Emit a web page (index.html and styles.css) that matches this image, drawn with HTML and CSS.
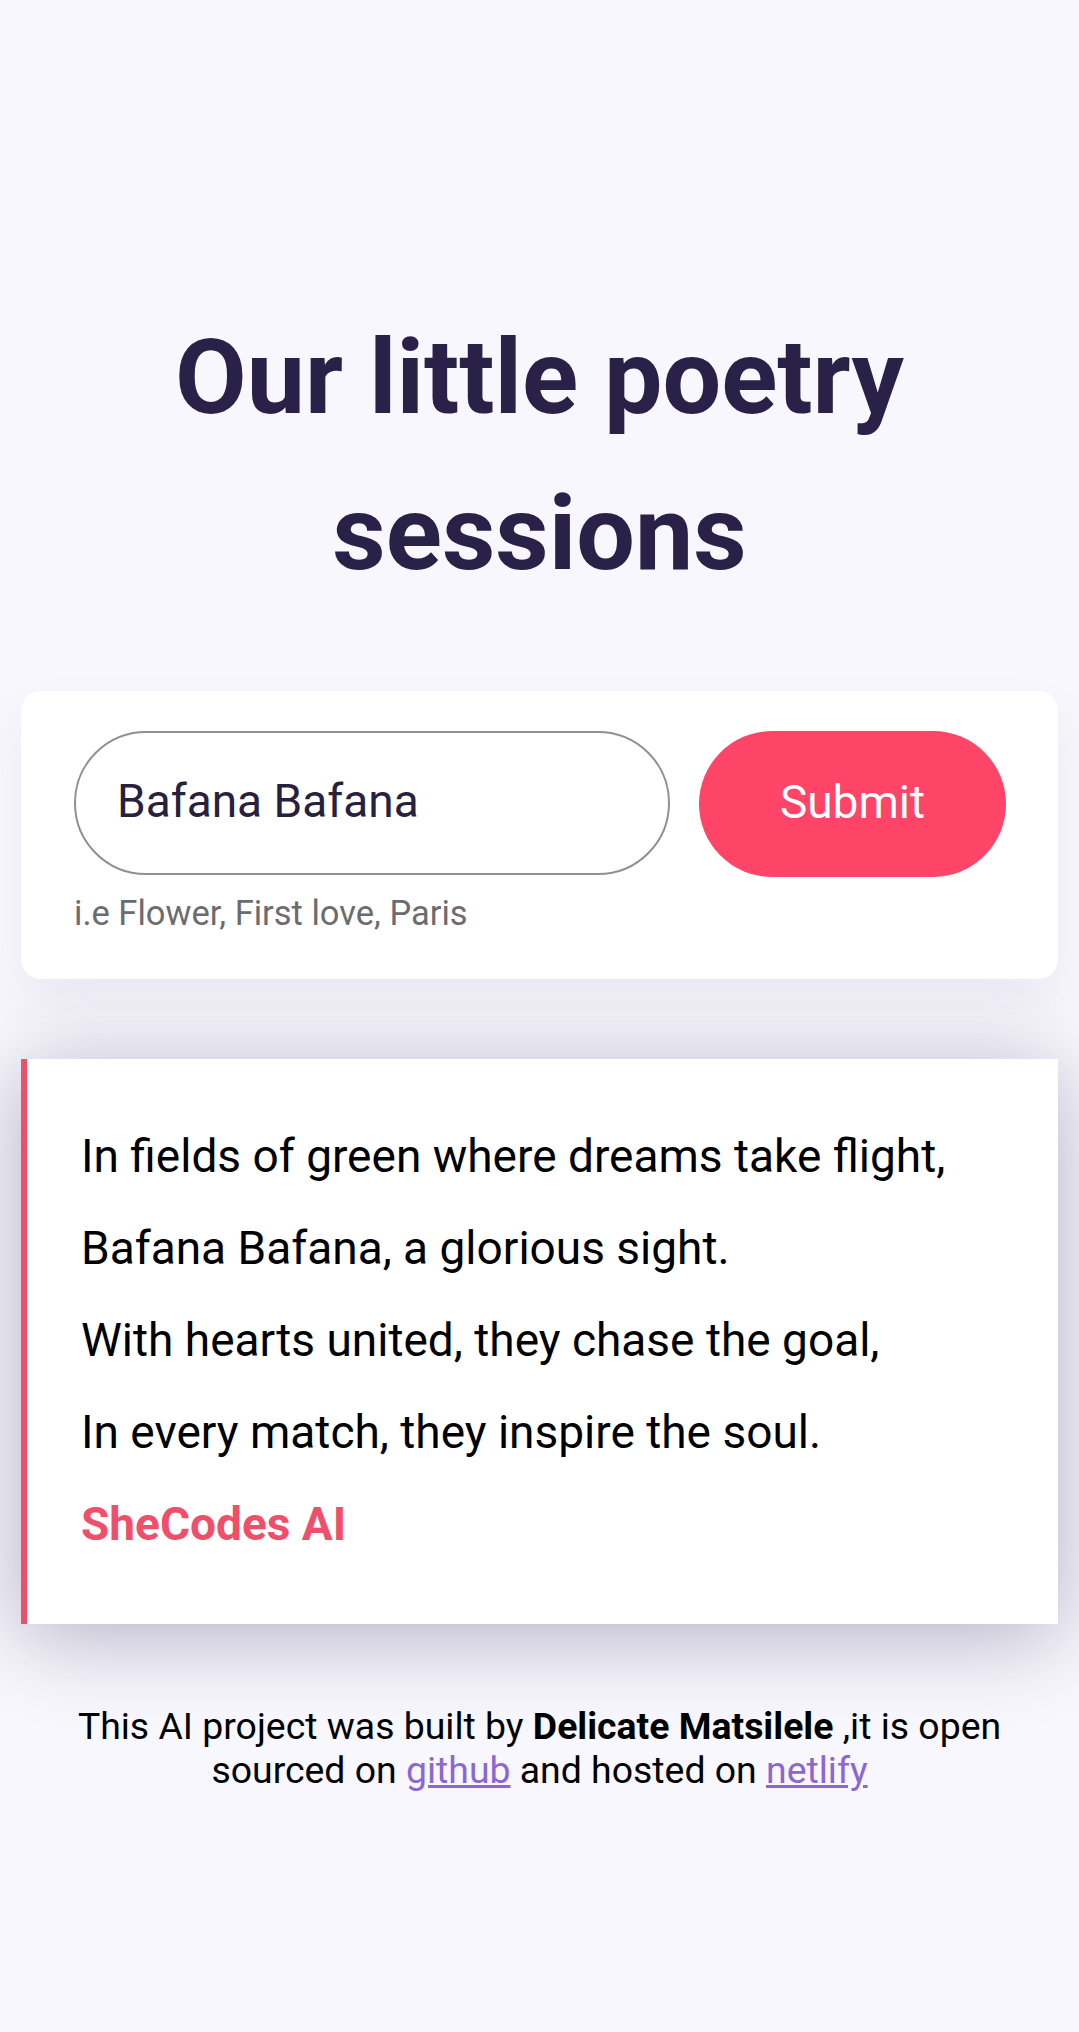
FILE: index.html
```html
<!DOCTYPE html>
<html lang="en">
<head>
<meta charset="utf-8">
<title>Our little poetry sessions</title>
<link rel="stylesheet" href="styles.css">
</head>
<body>
<div class="container">
  <h1 class="title">Our little poetry sessions</h1>
  <div class="form-card">
    <form class="search-form">
      <input class="search-input" type="text" value="Bafana Bafana">
      <button class="submit-btn" type="button">Submit</button>
    </form>
    <div class="hint">i.e Flower, First love, Paris</div>
  </div>
  <div class="poem">
    In fields of green where dreams take flight,<br>
    Bafana Bafana, a glorious sight.<br>
    With hearts united, they chase the goal,<br>
    In every match, they inspire the soul.<br>
    <strong class="signature">SheCodes AI</strong>
  </div>
  <footer class="footer">
    This AI project was built by <strong>Delicate Matsilele</strong> ,it is open sourced on <a href="#">github</a> and hosted on <a href="#">netlify</a>
  </footer>
</div>
</body>
</html>
```

FILE: styles.css
```css
* {
  box-sizing: border-box;
}

body {
  margin: 0;
  background: #f8f7fd;
  font-family: Roboto, "Liberation Sans", sans-serif;
  color: #000;
}

.container {
  padding: 300px 21px 100px;
}

.title {
  margin: 0 0 79px;
  font-size: 104px;
  line-height: 156px;
  font-weight: 700;
  text-align: center;
  color: #2a2148;
}

.form-card {
  background: #fff;
  border-radius: 20px;
  padding: 40px 52px 46px 53px;
  box-shadow: 0 25px 50px rgba(60, 50, 130, 0.07);
}

.search-form {
  display: flex;
  gap: 29px;
  margin: 0;
}

.search-input {
  flex: 1;
  min-width: 0;
  height: 144px;
  border: 2px solid #8f8f97;
  border-radius: 72px;
  padding: 0 30px 5px 41px;
  font-family: Roboto, "Liberation Sans", sans-serif;
  font-size: 46px;
  color: #27213f;
  background: #fff;
  outline: none;
}

.submit-btn {
  width: 307px;
  height: 146px;
  border: none;
  border-radius: 73px;
  padding: 0 0 5px;
  background: #ff4567;
  color: #fff;
  font-family: Roboto, "Liberation Sans", sans-serif;
  font-size: 46px;
  font-weight: 400;
}

.hint {
  margin-top: 16px;
  font-size: 34.5px;
  color: #6c6c70;
}

.poem {
  margin-top: 80px;
  background: #fff;
  border-left: 6px solid #f04f6c;
  padding: 51px 54px 54px 54px;
  font-size: 46px;
  line-height: 92px;
  color: #000;
  box-shadow: 0 12px 80px rgba(40, 34, 80, 0.33);
}

.signature {
  color: #f04f6c;
  font-weight: 700;
}

.footer {
  margin-top: 80px;
  text-align: center;
  font-size: 37.4px;
  line-height: 44px;
  color: #000;
}

.footer a {
  color: #8c66d3;
  text-decoration: underline;
}
```
